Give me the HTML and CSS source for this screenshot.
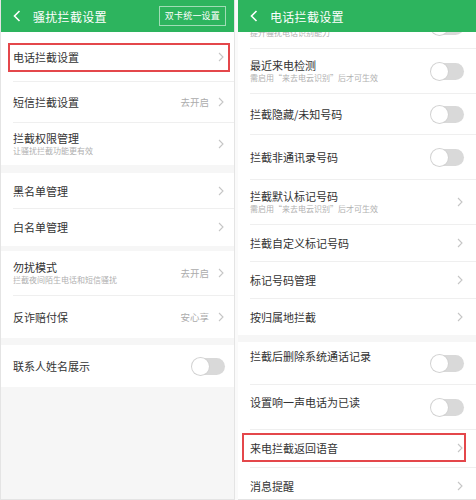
FILE: index.html
```html
<!DOCTYPE html>
<html lang="zh-CN">
<head>
    <meta charset="UTF-8">
    <meta name="viewport" content="width=device-width, initial-scale=1.0">
    <title>骚扰拦截设置</title>
    <link rel="stylesheet" href="styles.css">
</head>
<body>
    <div class="screens">
        <!-- left screen -->
        <div class="phone left">
            <div class="topbar">
                <svg class="back" width="8" height="12" viewBox="0 0 8 12"><polyline points="6.5,1 1.5,6 6.5,11" fill="none" stroke="#fff" stroke-width="1.6"/></svg>
                <span class="title">骚扰拦截设置</span>
                <span class="top-btn">双卡统一设置</span>
            </div>
            <div class="content">
                <div class="group">
                    <div class="row r49 marked">
                        <div class="label"><div class="name">电话拦截设置</div></div>
                        <svg class="chev" width="6" height="10" viewBox="0 0 6 10"><polyline points="1,1 5,5 1,9" fill="none" stroke="#c6c6c6" stroke-width="1.1"/></svg>
                    </div>
                    <div class="row r41">
                        <div class="label"><div class="name">短信拦截设置</div></div>
                        <span class="value">去开启</span>
                        <svg class="chev" width="6" height="10" viewBox="0 0 6 10"><polyline points="1,1 5,5 1,9" fill="none" stroke="#c6c6c6" stroke-width="1.1"/></svg>
                    </div>
                    <div class="row r43">
                        <div class="label">
                            <div class="name">拦截权限管理</div>
                            <div class="sub">让骚扰拦截功能更有效</div>
                        </div>
                        <svg class="chev" width="6" height="10" viewBox="0 0 6 10"><polyline points="1,1 5,5 1,9" fill="none" stroke="#c6c6c6" stroke-width="1.1"/></svg>
                    </div>
                </div>
                <div class="group g8">
                    <div class="row r35">
                        <div class="label"><div class="name">黑名单管理</div></div>
                        <svg class="chev" width="6" height="10" viewBox="0 0 6 10"><polyline points="1,1 5,5 1,9" fill="none" stroke="#c6c6c6" stroke-width="1.1"/></svg>
                    </div>
                    <div class="row r38">
                        <div class="label"><div class="name">白名单管理</div></div>
                        <svg class="chev" width="6" height="10" viewBox="0 0 6 10"><polyline points="1,1 5,5 1,9" fill="none" stroke="#c6c6c6" stroke-width="1.1"/></svg>
                    </div>
                </div>
                <div class="group g5">
                    <div class="row r44">
                        <div class="label">
                            <div class="name">勿扰模式</div>
                            <div class="sub">拦截夜间陌生电话和短信骚扰</div>
                        </div>
                        <span class="value">去开启</span>
                        <svg class="chev" width="6" height="10" viewBox="0 0 6 10"><polyline points="1,1 5,5 1,9" fill="none" stroke="#c6c6c6" stroke-width="1.1"/></svg>
                    </div>
                    <div class="row r43">
                        <div class="label"><div class="name">反诈赔付保</div></div>
                        <span class="value">安心享</span>
                        <svg class="chev" width="6" height="10" viewBox="0 0 6 10"><polyline points="1,1 5,5 1,9" fill="none" stroke="#c6c6c6" stroke-width="1.1"/></svg>
                    </div>
                </div>
                <div class="group g7">
                    <div class="row r42">
                        <div class="label"><div class="name">联系人姓名展示</div></div>
                        <span class="switch"></span>
                    </div>
                </div>
            </div>
        </div>

        <!-- right screen, list scrolled a little under the bar -->
        <div class="phone right">
            <div class="topbar">
                <svg class="back" width="8" height="12" viewBox="0 0 8 12"><polyline points="6.5,1 1.5,6 6.5,11" fill="none" stroke="#fff" stroke-width="1.6"/></svg>
                <span class="title">电话拦截设置</span>
            </div>
            <div class="content">
                <div class="group scrolled">
                    <div class="row r44">
                        <div class="label">
                            <div class="name-gap"></div>
                            <div class="sub">提升骚扰电话识别能力</div>
                        </div>
                        <span class="switch"></span>
                    </div>
                    <div class="row r45">
                        <div class="label">
                            <div class="name">最近来电检测</div>
                            <div class="sub">需启用“来去电云识别”后才可生效</div>
                        </div>
                        <span class="switch"></span>
                    </div>
                    <div class="row r41">
                        <div class="label"><div class="name">拦截隐藏/未知号码</div></div>
                        <span class="switch"></span>
                    </div>
                    <div class="row r45">
                        <div class="label"><div class="name">拦截非通讯录号码</div></div>
                        <span class="switch"></span>
                    </div>
                    <div class="row r45">
                        <div class="label">
                            <div class="name">拦截默认标记号码</div>
                            <div class="sub">需启用“来去电云识别”后才可生效</div>
                        </div>
                        <svg class="chev" width="6" height="10" viewBox="0 0 6 10"><polyline points="1,1 5,5 1,9" fill="none" stroke="#c6c6c6" stroke-width="1.1"/></svg>
                    </div>
                    <div class="row r37">
                        <div class="label"><div class="name">拦截自定义标记号码</div></div>
                        <svg class="chev" width="6" height="10" viewBox="0 0 6 10"><polyline points="1,1 5,5 1,9" fill="none" stroke="#c6c6c6" stroke-width="1.1"/></svg>
                    </div>
                    <div class="row r37">
                        <div class="label"><div class="name">标记号码管理</div></div>
                        <svg class="chev" width="6" height="10" viewBox="0 0 6 10"><polyline points="1,1 5,5 1,9" fill="none" stroke="#c6c6c6" stroke-width="1.1"/></svg>
                    </div>
                    <div class="row r37">
                        <div class="label"><div class="name">按归属地拦截</div></div>
                        <svg class="chev" width="6" height="10" viewBox="0 0 6 10"><polyline points="1,1 5,5 1,9" fill="none" stroke="#c6c6c6" stroke-width="1.1"/></svg>
                    </div>
                </div>
                <div class="group g7">
                    <div class="row r42">
                        <div class="label lift"><div class="name">拦截后删除系统通话记录</div></div>
                        <span class="switch"></span>
                    </div>
                    <div class="row r45">
                        <div class="label lift-sm"><div class="name">设置响一声电话为已读</div></div>
                        <span class="switch"></span>
                    </div>
                    <div class="row r38 marked">
                        <div class="label"><div class="name">来电拦截返回语音</div></div>
                        <svg class="chev" width="6" height="10" viewBox="0 0 6 10"><polyline points="1,1 5,5 1,9" fill="none" stroke="#c6c6c6" stroke-width="1.1"/></svg>
                    </div>
                    <div class="row r38">
                        <div class="label"><div class="name">消息提醒</div></div>
                        <svg class="chev" width="6" height="10" viewBox="0 0 6 10"><polyline points="1,1 5,5 1,9" fill="none" stroke="#c6c6c6" stroke-width="1.1"/></svg>
                    </div>
                </div>
            </div>
        </div>
    </div>
</body>
</html>
```

FILE: styles.css
```css
* {
    box-sizing: border-box;
}
body {
    margin: 0;
    background: #fafafa;
    font-family: "Noto Sans CJK SC", "Noto Sans", sans-serif;
    color: #333;
}
.screens {
    display: flex;
    gap: 3px;
    width: 476px;
    height: 500px;
    overflow: hidden;
}
.phone {
    display: flex;
    flex-direction: column;
    height: 500px;
    background: #f6f6f6;
    border-left: 1px solid #e4e4e4;
    border-bottom: 1px solid #e4e4e4;
    overflow: hidden;
}
.phone.left {
    width: 235px;
    border-right: 1px solid #e4e4e4;
}
.phone.right {
    width: 238px;
    border-left: none;
}
.topbar {
    flex: none;
    position: relative;
    z-index: 2;
    display: flex;
    align-items: center;
    height: 32px;
    padding: 0 8px 0 12px;
    background: #2db45e;
    color: #fff;
}
.back {
    flex: none;
    margin-top: -1px;
}
.title {
    margin-left: 12px;
    font-size: 12px;
    letter-spacing: 0.3px;
}
.top-btn {
    margin-left: auto;
    height: 20px;
    padding: 0 5px;
    border: 1px solid rgba(255, 255, 255, 0.55);
    font-size: 9px;
    line-height: 18px;
    letter-spacing: 0.2px;
}
.content {
    flex: 1;
    overflow: hidden;
}
.group {
    background: #fff;
}
.group.scrolled {
    margin-top: -28px;
}
.g5 { margin-top: 5px; }
.g7 { margin-top: 7px; }
.g8 { margin-top: 8px; }

.row {
    position: relative;
    display: flex;
    align-items: center;
    padding: 0 9px 0 12px;
}
.right .row {
    padding-right: 12px;
}
.row + .row {
    background: linear-gradient(#efefef, #efefef) 12px 0 / 100% 1px no-repeat #fff;
}
.r35 { height: 35px; }
.r37 { height: 37px; }
.r38 { height: 38px; }
.r41 { height: 41px; }
.r42 { height: 42px; }
.r43 { height: 43px; }
.r44 { height: 44px; }
.r45 { height: 45px; }
.r49 { height: 49px; }

.label {
    flex: 1;
    min-width: 0;
}
.label.lift { padding-bottom: 14px; }
.label.lift-sm { padding-bottom: 9px; }
.name {
    font-size: 11px;
    line-height: 14px;
    color: #333;
    white-space: nowrap;
}
.name-gap {
    height: 14px;
}
.sub {
    font-size: 8px;
    line-height: 12px;
    color: #b0b0b0;
    white-space: nowrap;
}
.value {
    margin-right: 9px;
    font-size: 9.5px;
    color: #ababab;
}
.chev {
    flex: none;
    margin-right: 1px;
}
.switch {
    flex: none;
    position: relative;
    width: 33px;
    height: 17px;
    border-radius: 9px;
    background: #d9d9d9;
    margin-top: 1px;
}
.switch::before {
    content: "";
    position: absolute;
    left: 0;
    top: 0;
    width: 17px;
    height: 17px;
    border-radius: 50%;
    background: #fff;
    box-shadow: 0 0 0 1px #d2d2d2;
}
/* red marker drawn over the screenshot */
.row.marked::after {
    content: "";
    position: absolute;
    border: 2px solid #e4474b;
}
.left .row.marked::after {
    top: 11px;
    bottom: 9px;
    left: 7px;
    right: 4px;
}
.right .row.marked::after {
    top: 4px;
    bottom: 5px;
    left: 4px;
    right: 10px;
}
```
